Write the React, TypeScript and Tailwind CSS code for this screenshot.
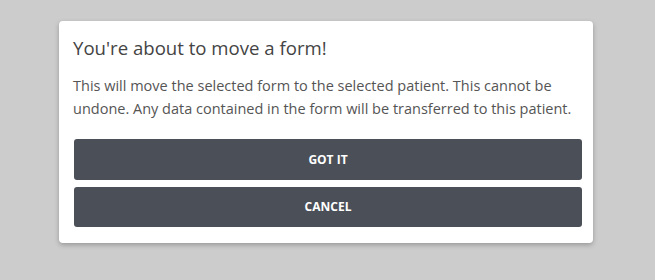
import React from "react";

export default function App() {
  return (
    <div className="w-[655px] h-[280px] bg-[#cccccc] pt-[21px]" style={{ fontFamily: '"Open Sans", sans-serif' }}>
      <div className="ml-[59px] w-[534px] h-[222px] bg-white rounded-[4px] shadow-[0_2px_5px_rgba(0,0,0,0.25)] pt-[14px] pl-[14px] pr-[11px]">
        <h1 className="text-[18.6px] leading-[26px] text-[#444444]">You're about to move a form!</h1>
        <p className="mt-[14px] text-[14.5px] leading-[22.5px] text-[#555555]">
          This will move the selected form to the selected patient. This cannot be undone. Any data contained in the form will be transferred to this patient.
        </p>
        <div className="mt-[19px] ml-[1px] flex flex-col gap-[7px]">
          <button className="h-[41px] rounded-[3px] bg-[#4b4f57] text-white text-[12px] font-bold">GOT IT</button>
          <button className="h-[40px] rounded-[3px] bg-[#4b4f57] text-white text-[12px] font-bold">CANCEL</button>
        </div>
      </div>
    </div>
  );
}
